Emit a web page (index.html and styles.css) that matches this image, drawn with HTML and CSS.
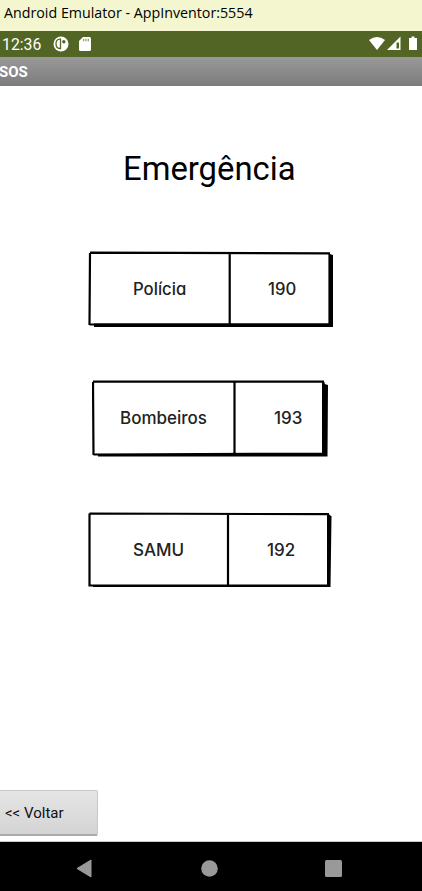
FILE: index.html
```
<!DOCTYPE html>
<html lang="pt">
<head>
<meta charset="utf-8">
<title>SOS</title>
<link rel="stylesheet" href="styles.css">
</head>
<body>
<div class="window-title"><span>Android Emulator - AppInventor:5554</span></div>
<div class="status">
  <span class="clock">12:36</span>
  <svg class="app-icon" width="16" height="16" viewBox="0 0 16 16"><circle cx="8" cy="8" r="7.500" fill="#fff"/><path d="M7.500 3.200H6.800C4 3.200 3 5.200 3 7.800s1 4.700 3.800 4.700h.7z" fill="none" stroke="#526525" stroke-width="1.300"/><circle cx="10.800" cy="5.800" r="1.700" fill="#526525"/></svg>
  <svg class="sd" width="12" height="14" viewBox="0 0 12 14"><path d="M4 0h6.500Q12 0 12 1.500v11Q12 14 10.500 14h-9Q0 14 0 12.500V4z" fill="#fff"/><path d="M4.700 1.800v2.500M7 1.800v2.500M9.300 1.800v2.500" stroke="#8c9970" stroke-width="1.200"/></svg>
  <svg class="signals" width="50" height="16" viewBox="0 0 50 16"><path d="M1 4Q9-2 17 4L9 14z" fill="#fff"/><path d="M32.500 .5V14H19z" fill="#fff"/><path d="M28.500 6.500h2.500v6h-2.500z" fill="#526525"/><path d="M41.500 2h2V.5h3V2h2.500v12h-8V2z" fill="#fff"/></svg>
</div>
<div class="app-bar"><span>SOS</span></div>
<main>
  <h1><span>Emergência</span></h1>
  <section class="card police">
    <svg class="frame" width="246" height="78" viewBox="0 0 246 78"><path d="M6 72.500H241V3L245 4V76H6z"/><path class="line" d="M2 1.700L242 2.300M2 2L1.500 74M141.700 2.500V74M1.500 73.500H242M241.500 3V74"/></svg>
    <span class="name">Polícia</span><span class="number">190</span>
  </section>
  <section class="card fire">
    <svg class="frame" width="246" height="78" viewBox="0 0 246 78"><path d="M6 74H230V2L232.500 4L236 5L235.500 76.500H6z"/><path class="line" d="M1 1.700H232M1 2L1.500 75M142.500 2.500V75M1.500 74.500L231 73.500M231.500 2V75"/></svg>
    <span class="name">Bombeiros</span><span class="number">193</span>
  </section>
  <section class="card samu">
    <svg class="frame" width="246" height="78" viewBox="0 0 246 78"><path d="M5 73H239V2L243.500 4L242.500 75H5z"/><path class="line" d="M1.500 1.500L241 2.200M1.500 1.500V74.500M140 2.500V74M1.500 73.500H242M240.500 2.500V74"/></svg>
    <span class="name">SAMU</span><span class="number">192</span>
  </section>
  <button class="back"><span>&lt;&lt; Voltar</span></button>
</main>
<nav>
  <svg width="16" height="19" viewBox="0 0 16 19"><path d="M15 1v17L1 9.500z" fill="#999" stroke="#999" stroke-linejoin="round"/></svg>
  <svg width="17" height="17" viewBox="0 0 17 17"><circle cx="8.500" cy="8.500" r="8.300" fill="#999"/></svg>
  <svg width="17" height="17" viewBox="0 0 17 17"><rect width="17" height="17" rx="1.500" fill="#999"/></svg>
</nav>
</body>
</html>
```
FILE: styles.css
```
* { box-sizing: border-box; }
body { margin: 0; width: 422px; height: 891px; display: flex; flex-direction: column; overflow: hidden; background: #fff; font-family: Roboto, sans-serif; color: #000; }
span { white-space: nowrap; }
.window-title { height: 31px; padding: 4px 0 0 4px; background: #f4f6cf; font: 14.25px/18px "Open Sans", sans-serif; }
.status { height: 26px; display: flex; align-items: center; padding: 0 4px 0 2px; background: #526525; color: #fff; }
.clock { width: 51px; font-size: 15.8px; }
.sd { margin-left: 10px; }
.signals { margin-left: auto; }
.app-bar { height: 29px; padding-top: 6px; background: linear-gradient(#999, #7c7c7c); color: #fff; font-size: 15px; line-height: 19px; font-weight: 700; }
.app-bar span { margin-left: -1px; }
main { height: 756px; display: flex; flex-direction: column; align-items: flex-start; border-bottom: 1px solid #ccc; }
h1 { margin: 63px 0 0 123px; font-size: 32.8px; line-height: 40px; font-weight: 400; }
.card { position: relative; display: grid; width: 246px; height: 78px; align-items: center; font: 450 17px/20px Inter, sans-serif; font-feature-settings: "cv11"; color: #222; }
.frame { position: absolute; left: 0; top: 0; }
.line { fill: none; stroke: #000; stroke-width: 2.200; }
.police { margin: 62px 0 0 88px; padding: 0 0 3px 45px; grid-template-columns: 135px 1fr; font-size: 16.7px; }
.fire { margin: 51px 0 0 92px; padding: 0 0 3px 28px; grid-template-columns: 154px 1fr; }
.samu { margin: 54px 0 0 88px; padding: 0 0 3px 45px; grid-template-columns: 134px 1fr; }
.back { width: 100px; height: 46px; margin: auto 0 5px -2px; padding: 1px 0 0 6px; border: 1px solid #c8c8c8; border-bottom: 2px solid #aaa; border-radius: 2px; background: linear-gradient(#e5e5e5, #d4d4d4); text-align: left; font: 15px/20px Roboto, sans-serif; color: #111; }
nav { height: 49px; display: flex; align-items: center; padding: 4px 0 0 76px; background: #000; }
nav svg:nth-child(2) { margin-left: 109px; }
nav svg:nth-child(3) { margin-left: 107px; }
```
